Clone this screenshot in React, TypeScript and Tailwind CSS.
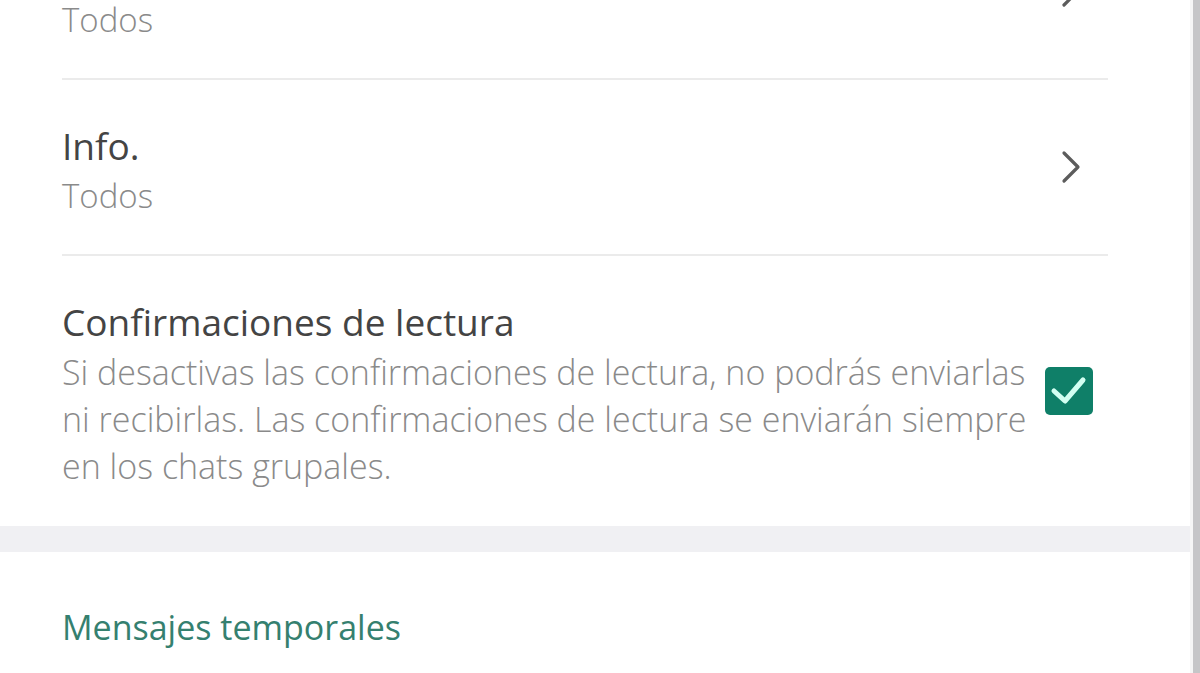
const font = { fontFamily: '"Open Sans", "Noto Sans", sans-serif' };

function Chevron() {
  return (
    <svg viewBox="0 0 24 36" className="mr-[25px] h-[36px] w-[24px]" fill="none">
      <path
        d="M5 4 L19 18 L5 32"
        stroke="#5c5c5c"
        strokeWidth="3.2"
        strokeLinecap="round"
        strokeLinejoin="round"
      />
    </svg>
  );
}

function NavRow({ title, value }: { title: string; value: string }) {
  return (
    <div className="flex h-[176px] items-center border-b-2 border-[#ebebeb]">
      <div className="flex flex-1 flex-col pt-[14px]">
        <span className="text-[37px] leading-[44px] text-[#444444]">{title}</span>
        <span className="text-[33px] font-light leading-[56px] text-[#8a8a8a]">{value}</span>
      </div>
      <Chevron />
    </div>
  );
}

export default function App() {
  return (
    <div className="flex h-[673px] w-[1200px] overflow-hidden bg-white" style={font}>
      <div className="flex flex-1 flex-col">
        <div className="-mt-[96px] pl-[62px] pr-[82px]">
          <NavRow title="Foto del perfil" value="Todos" />
          <NavRow title="Info." value="Todos" />
          <div className="flex h-[270px] items-center gap-[16px]">
            <div className="flex flex-1 flex-col pt-[7px]">
              <span className="text-[37px] leading-[44px] text-[#444444]">
                Confirmaciones de lectura
              </span>
              <span className="mt-[5px] text-[34px] font-light leading-[47px] text-[#8a8a8a]">
                <span className="block whitespace-nowrap">
                  Si desactivas las confirmaciones de lectura, no podrás enviarlas
                </span>
                <span className="block whitespace-nowrap">
                  ni recibirlas. Las confirmaciones de lectura se enviarán siempre
                </span>
                <span className="block whitespace-nowrap">en los chats grupales.</span>
              </span>
            </div>
            <div className="mr-[15px] flex h-[48px] w-[48px] shrink-0 items-center justify-center rounded-[5px] bg-[#0f7f68]">
              <svg viewBox="0 0 48 48" className="h-[48px] w-[48px]" fill="none">
                <path
                  d="M9 24 L20 34 L38 13"
                  stroke="#d2fff2"
                  strokeWidth="5"
                  strokeLinecap="round"
                  strokeLinejoin="round"
                />
              </svg>
            </div>
          </div>
        </div>
        <div className="h-[26px] shrink-0 bg-[#f0f0f3]" />
        <div className="pl-[62px] pt-[53px]">
          <span className="text-[34px] leading-[44px] text-[#35806f]">Mensajes temporales</span>
        </div>
      </div>
      <div className="w-[3px] bg-[#f6f6f6]" />
      <div className="w-[7px] bg-[#c6c6c8]" />
    </div>
  );
}
